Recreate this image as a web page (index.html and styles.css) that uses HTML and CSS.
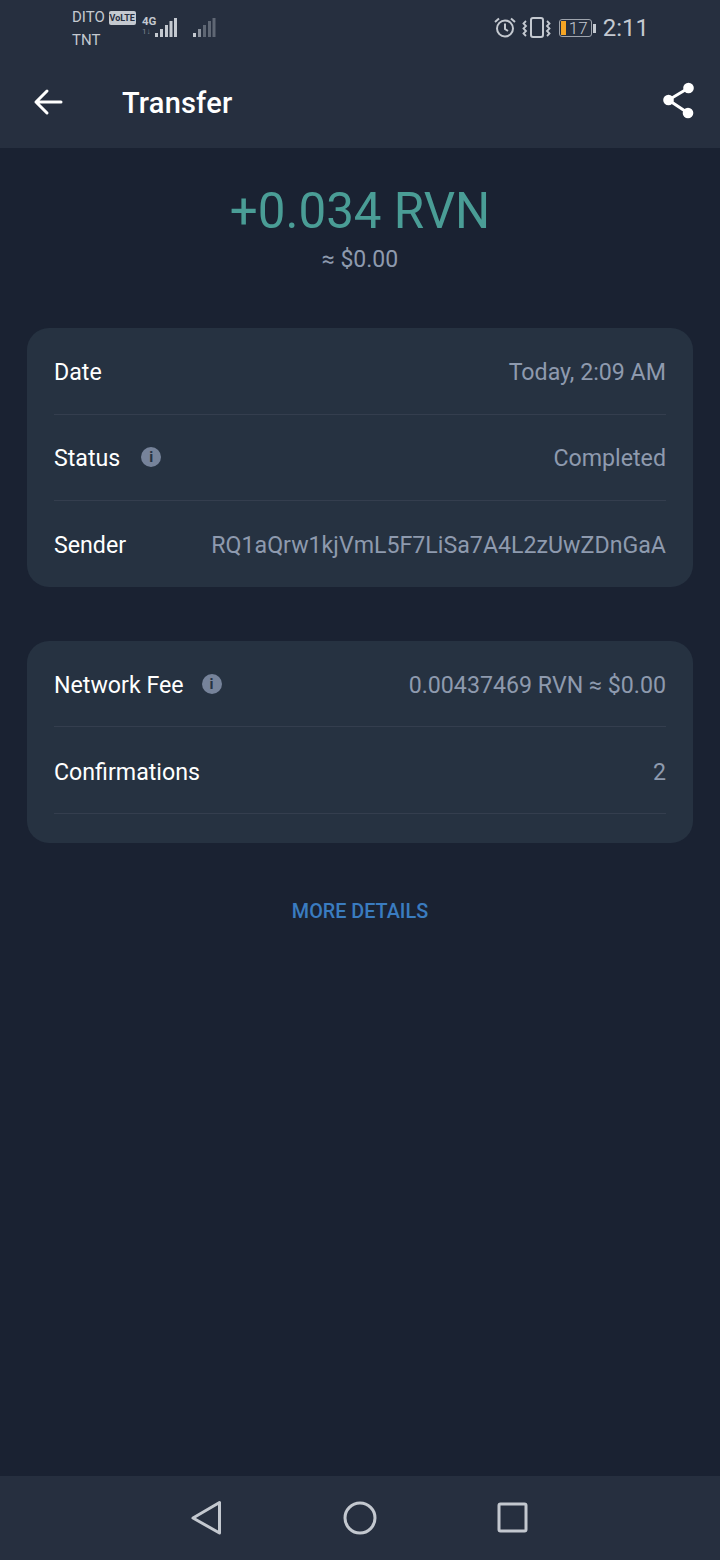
FILE: index.html
```html
<!DOCTYPE html>
<html lang="en">
<head>
  <meta charset="UTF-8" />
  <meta name="viewport" content="width=device-width, initial-scale=1.0"/>
  <title>Transfer</title>
  <link rel="stylesheet" href="styles.css">
</head>
<body>
  <div class="phone">
    <header class="topbar">
      <div class="statusbar">
        <div class="carriers">
          <div class="carrier-line">DITO <span class="volte">VoLTE</span></div>
          <div class="carrier-line">TNT</div>
        </div>
        <div class="net">
          <div class="net-label">4G<span class="net-sub">1↓</span></div>
          <svg class="signal" width="24" height="24" viewBox="0 0 24 24">
            <rect x="0" y="18" width="3" height="4" fill="#c4c9d0"/>
            <rect x="5" y="14" width="3" height="8" fill="#c4c9d0"/>
            <rect x="10" y="10" width="3" height="12" fill="#c4c9d0"/>
            <rect x="14.500" y="6" width="3" height="16" fill="#c4c9d0"/>
            <rect x="19" y="3" width="3" height="19" fill="#c4c9d0"/>
          </svg>
        </div>
        <svg class="signal signal-dim" width="24" height="24" viewBox="0 0 24 24">
          <rect x="1" y="18" width="3" height="4" fill="#c4c9d0"/>
          <rect x="6" y="14" width="3" height="8" fill="#8a919c"/>
          <rect x="11" y="10" width="3" height="12" fill="#5f6774"/>
          <rect x="16" y="6" width="3" height="16" fill="#5f6774"/>
          <rect x="20.500" y="3" width="3" height="19" fill="#5f6774"/>
        </svg>
        <div class="status-right">
          <svg width="24" height="24" viewBox="0 0 24 24" fill="none" stroke="#c4c9d0" stroke-width="2">
            <circle cx="12" cy="12.500" r="8"/>
            <path d="M12 7.500v5.500l3 2"/>
            <path d="M2 6l4-3.500M22 6l-4-3.500"/>
          </svg>
          <svg width="30" height="24" viewBox="0 0 30 24" fill="none" stroke="#c4c9d0" stroke-width="2">
            <rect x="10" y="2" width="12" height="19" rx="2"/>
            <path d="M5 5L2.500 7.500 5 10 2.500 12.500 5 15 2.500 17.500 5 20M26 5l2.500 2.500L26 10l2.500 2.500L26 15l2.500 2.500L26 20" stroke-width="1.800"/>
          </svg>
          <div class="battery">
            <div class="battery-body">
              <span class="battery-fill"></span>
              <span class="battery-num">17</span>
            </div>
            <span class="battery-tip"></span>
          </div>
          <span class="clock">2:11</span>
        </div>
      </div>
      <div class="toolbar">
        <svg class="back" width="32" height="32" viewBox="0 0 32 32" fill="none" stroke="#fff" stroke-width="3" stroke-linecap="round" stroke-linejoin="round">
          <path d="M29 16H4M15 5L4 16l11 11"/>
        </svg>
        <h1>Transfer</h1>
        <svg class="share" width="34" height="38" viewBox="0 0 34 38" fill="#fff">
          <circle cx="26.500" cy="7" r="5.300"/>
          <circle cx="6.500" cy="19" r="5.300"/>
          <circle cx="26" cy="32" r="5.300"/>
          <path d="M26.500 7L6.500 19 26 32" fill="none" stroke="#fff" stroke-width="3"/>
        </svg>
      </div>
    </header>

    <main class="content">
      <div class="amount">
        <div class="amount-value">+0.034 RVN</div>
        <div class="amount-fiat">≈ $0.00</div>
      </div>

      <section class="card card-main">
        <div class="row">
          <span class="label">Date</span>
          <span class="value">Today, 2:09 AM</span>
        </div>
        <div class="row">
          <span class="label">Status <span class="info">i</span></span>
          <span class="value">Completed</span>
        </div>
        <div class="row">
          <span class="label">Sender</span>
          <span class="value">RQ1aQrw1kjVmL5F7LiSa7A4L2zUwZDnGaA</span>
        </div>
      </section>

      <section class="card card-fee">
        <div class="row">
          <span class="label">Network Fee <span class="info">i</span></span>
          <span class="value">0.00437469 RVN ≈ $0.00</span>
        </div>
        <div class="row row-tall">
          <span class="label">Confirmations</span>
          <span class="value">2</span>
        </div>
        <div class="row row-empty"></div>
      </section>

      <a class="more" href="#">MORE DETAILS</a>
    </main>

    <footer class="navbar">
      <svg width="36" height="36" viewBox="0 0 36 36" fill="none" stroke="#c3c8cf" stroke-width="3" stroke-linejoin="round">
        <path d="M30.500 2.500V33L4 18z"/>
      </svg>
      <svg width="36" height="36" viewBox="0 0 36 36" fill="none" stroke="#c3c8cf" stroke-width="3">
        <circle cx="18" cy="18" r="15"/>
      </svg>
      <svg width="36" height="36" viewBox="0 0 36 36" fill="none" stroke="#c3c8cf" stroke-width="3" stroke-linejoin="round">
        <rect x="4" y="4" width="27" height="27" rx="1.500"/>
      </svg>
    </footer>
  </div>
</body>
</html>
```

FILE: styles.css
```css
html, body {
  margin: 0;
  padding: 0;
}
body {
  font-family: Roboto, "Liberation Sans", sans-serif;
  background: #1a2232;
}
.phone {
  width: 720px;
  height: 1560px;
  display: flex;
  flex-direction: column;
  overflow: hidden;
}

/* top */
.topbar {
  height: 148px;
  background: #262f3f;
  flex-shrink: 0;
}
.statusbar {
  height: 54px;
  display: flex;
  align-items: flex-start;
  padding-left: 72px;
  padding-right: 71px;
  color: #c4c9d0;
}
.carriers {
  width: 70px;
  padding-top: 6px;
  font-size: 15px;
  line-height: 22px;
}
.carrier-line {
  white-space: nowrap;
}
.volte {
  background: #c4c9d0;
  color: #262f3f;
  font-size: 9px;
  font-weight: 700;
  padding: 2px 1px;
  border-radius: 2px;
  vertical-align: 1px;
}
.net {
  display: flex;
  align-items: flex-start;
  margin-top: 15px;
  width: 50px;
}
.net-label {
  font-size: 11.500px;
  font-weight: 700;
  width: 13px;
  line-height: 12px;
}
.net-sub {
  display: block;
  font-size: 8px;
  font-weight: 400;
  line-height: 10px;
  color: #7d8592;
}
.signal-dim {
  margin-top: 15px;
}
.status-right {
  margin-left: auto;
  display: flex;
  align-items: center;
  gap: 4px;
  height: 56px;
}
.battery {
  display: flex;
  align-items: center;
  margin-left: 4px;
}
.battery-body {
  width: 31px;
  height: 16px;
  border: 1px solid #9ea4ad;
  border-radius: 3px;
  position: relative;
  display: flex;
  align-items: center;
  justify-content: center;
}
.battery-fill {
  position: absolute;
  left: 1px;
  top: 1px;
  bottom: 1px;
  width: 5px;
  background: #f5a524;
}
.battery-num {
  font-size: 17px;
  font-weight: 300;
  margin-left: 6px;
  line-height: 16px;
}
.battery-tip {
  width: 3px;
  height: 9px;
  background: #c4c9d0;
  margin-left: 1px;
}
.clock {
  font-size: 24px;
  margin-left: 3px;
}
.toolbar {
  height: 94px;
  display: flex;
  align-items: center;
  padding: 0 24px 0 32px;
  color: #fff;
}
.back {
  flex-shrink: 0;
  margin-top: 2px;
}
.toolbar h1 {
  margin: 4px 0 0 58px;
  font-size: 29px;
  font-weight: 500;
  letter-spacing: 0.2px;
  flex: 1;
}
.share {
  margin-bottom: 2px;
}

/* content */
.content {
  flex: 1;
  padding: 0 27px;
  display: flex;
  flex-direction: column;
}
.amount {
  padding-top: 33px;
  height: 180px;
  box-sizing: border-box;
  text-align: center;
}
.amount-value {
  font-size: 49.300px;
  line-height: 60px;
  color: #4a9d96;
}
.amount-fiat {
  margin-top: 1px;
  font-size: 23px;
  line-height: 36px;
  color: #8e9aae;
}
.card {
  background: #263241;
  border-radius: 22px;
  padding: 0 27px;
}
.card-main {
  padding-top: 1px;
}
.card-fee {
  margin-top: 54px;
}
.row {
  height: 86px;
  padding-top: 1px;
  display: flex;
  align-items: center;
  justify-content: space-between;
  border-bottom: 1px solid #343e4e;
  box-sizing: border-box;
  font-size: 23.200px;
}
.card-fee .row {
  padding-top: 2px;
}
.card-fee .row-tall {
  height: 87px;
  padding-top: 4px;
}
.row:nth-child(3) {
  border-bottom: none;
}
.row-empty {
  height: 29px;
}
.label {
  color: #fff;
  display: flex;
  align-items: center;
}
.info {
  width: 20px;
  height: 20px;
  margin-left: 21px;
  margin-bottom: 2px;
  border-radius: 50%;
  background: #76839a;
  color: #263241;
  font-size: 15px;
  font-weight: 700;
  line-height: 20px;
  text-align: center;
}
.card-fee .info {
  margin-left: 18px;
}
.value {
  color: #8e9aae;
}
.more {
  margin-top: 56px;
  text-align: center;
  font-size: 19.800px;
  font-weight: 500;
  line-height: 26px;
  color: #3a7cc0;
  text-decoration: none;
}

/* bottom */
.navbar {
  height: 84px;
  flex-shrink: 0;
  background: #262f3f;
  display: flex;
  justify-content: center;
  align-items: center;
  gap: 117px;
}
```
